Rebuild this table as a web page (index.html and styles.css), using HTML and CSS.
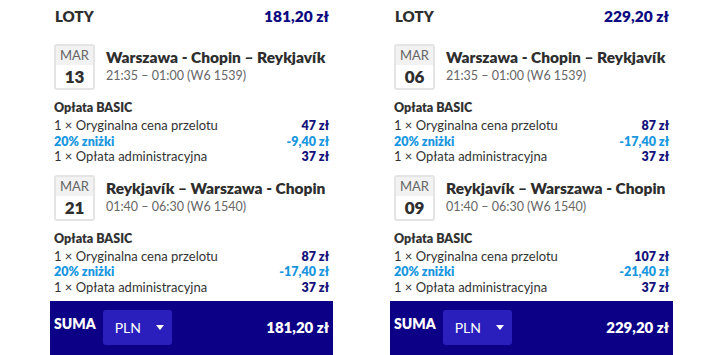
FILE: index.html
```html
<!DOCTYPE html>
<html lang="pl">
<head>
<meta charset="utf-8">
<link rel="stylesheet" href="styles.css">
</head>
<body>
<div class="wrap">
  <section class="panel">
    <div class="head"><span class="head-label">LOTY</span><span class="head-total">181,20 zł</span></div>
    <div class="flight">
      <div class="date"><div class="date-m">MAR</div><div class="date-d">13</div></div>
      <div class="route">
        <div class="route-title">Warszawa - Chopin – Reykjavík</div>
        <div class="route-sub">21:35 – 01:00 (W6 1539)</div>
      </div>
    </div>
    <div class="fees">
      <div class="fee-title">Opłata BASIC</div>
      <div class="fee"><span>1 × Oryginalna cena przelotu</span><span class="amt">47 zł</span></div>
      <div class="fee disc"><span class="disc-label">20% zniżki</span><span class="amt">-9,40 zł</span></div>
      <div class="fee"><span>1 × Opłata administracyjna</span><span class="amt">37 zł</span></div>
    </div>
    <div class="flight">
      <div class="date"><div class="date-m">MAR</div><div class="date-d">21</div></div>
      <div class="route">
        <div class="route-title">Reykjavík – Warszawa - Chopin</div>
        <div class="route-sub">01:40 – 06:30 (W6 1540)</div>
      </div>
    </div>
    <div class="fees">
      <div class="fee-title">Opłata BASIC</div>
      <div class="fee"><span>1 × Oryginalna cena przelotu</span><span class="amt">87 zł</span></div>
      <div class="fee disc"><span class="disc-label">20% zniżki</span><span class="amt">-17,40 zł</span></div>
      <div class="fee"><span>1 × Opłata administracyjna</span><span class="amt">37 zł</span></div>
    </div>
    <div class="foot">
      <span class="foot-label">SUMA</span>
      <div class="cur"><span>PLN</span><span class="caret"></span></div>
      <span class="foot-total">181,20 zł</span>
    </div>
  </section>
  <section class="panel">
    <div class="head"><span class="head-label">LOTY</span><span class="head-total">229,20 zł</span></div>
    <div class="flight">
      <div class="date"><div class="date-m">MAR</div><div class="date-d">06</div></div>
      <div class="route">
        <div class="route-title">Warszawa - Chopin – Reykjavík</div>
        <div class="route-sub">21:35 – 01:00 (W6 1539)</div>
      </div>
    </div>
    <div class="fees">
      <div class="fee-title">Opłata BASIC</div>
      <div class="fee"><span>1 × Oryginalna cena przelotu</span><span class="amt">87 zł</span></div>
      <div class="fee disc"><span class="disc-label">20% zniżki</span><span class="amt">-17,40 zł</span></div>
      <div class="fee"><span>1 × Opłata administracyjna</span><span class="amt">37 zł</span></div>
    </div>
    <div class="flight">
      <div class="date"><div class="date-m">MAR</div><div class="date-d">09</div></div>
      <div class="route">
        <div class="route-title">Reykjavík – Warszawa - Chopin</div>
        <div class="route-sub">01:40 – 06:30 (W6 1540)</div>
      </div>
    </div>
    <div class="fees">
      <div class="fee-title">Opłata BASIC</div>
      <div class="fee"><span>1 × Oryginalna cena przelotu</span><span class="amt">107 zł</span></div>
      <div class="fee disc"><span class="disc-label">20% zniżki</span><span class="amt">-21,40 zł</span></div>
      <div class="fee"><span>1 × Opłata administracyjna</span><span class="amt">37 zł</span></div>
    </div>
    <div class="foot">
      <span class="foot-label">SUMA</span>
      <div class="cur"><span>PLN</span><span class="caret"></span></div>
      <span class="foot-total">229,20 zł</span>
    </div>
  </section>
</div>
</body>
</html>
```
FILE: styles.css
```css
* { box-sizing: border-box; }
html, body { margin: 0; padding: 0; background: #fff; }
body {
  font-family: Lato, "Open Sans", sans-serif;
  color: #333;
  overflow: hidden;
  height: 355px;
}
.wrap {
  display: flex;
  gap: 57px;
  padding-left: 50px;
}
.panel {
  width: 283px;
  display: flex;
  flex-direction: column;
}
.head {
  height: 32px;
  display: flex;
  align-items: center;
  justify-content: space-between;
  padding: 0 4px 0 5px;
}
.head-label { font-weight: 800; font-size: 15px; color: #2e2e2e; }
.head-total { font-weight: 800; font-size: 15.5px; color: #0d0b80; }
.flight {
  display: flex;
  margin-top: 12px;
  padding-left: 4px;
}
.fees + .flight { margin-top: 10px; }
.date {
  width: 41px;
  height: 46px;
  border: 2px solid #e4e4e4;
  border-radius: 3px;
  overflow: hidden;
  text-align: center;
  flex: none;
}
.date-m {
  background: #f2f2f2;
  font-size: 13px;
  line-height: 19px;
  color: #666;
}
.date-d {
  font-size: 17px;
  font-weight: 800;
  line-height: 23px;
  color: #2e2e2e;
}
.route { margin-left: 11px; padding-top: 3px; }
.route-title { font-weight: 800; font-size: 15.5px; line-height: 20px; color: #2e2e2e; }
.route-sub { font-size: 12.5px; line-height: 16px; color: #666; margin-top: 1px; }
.fees {
  margin-top: 10px;
  padding: 0 4px;
  font-size: 13px;
}
.fee-title { font-weight: 800; font-size: 12.5px; line-height: 16px; margin-bottom: 2px; }
.fee {
  display: flex;
  justify-content: space-between;
  align-items: baseline;
  line-height: 15.5px;
}
.amt { font-weight: 800; font-size: 12.5px; color: #14127a; }
.disc { color: #1a97df; }
.disc .amt { color: #1a97df; }
.disc-label { font-weight: 800; font-size: 12.5px; }
.foot {
  margin-top: 6px;
  background: #0b0086;
  height: 60px;
  display: flex;
  align-items: flex-start;
  padding: 0 4px;
  color: #fff;
}
.foot-label { font-weight: 800; font-size: 14px; margin-top: 14px; }
.cur {
  margin: 9px 0 0 7px;
  width: 69px;
  height: 35px;
  background: #2a1fbd;
  border-radius: 3px;
  display: flex;
  align-items: center;
  padding-left: 12px;
  font-size: 14px;
}
.caret {
  margin-left: 15px;
  width: 0;
  height: 0;
  border-left: 4px solid transparent;
  border-right: 4px solid transparent;
  border-top: 5px solid #fff;
}
.foot-total { margin-left: auto; font-weight: 800; font-size: 15px; margin-top: 17px; }
```
